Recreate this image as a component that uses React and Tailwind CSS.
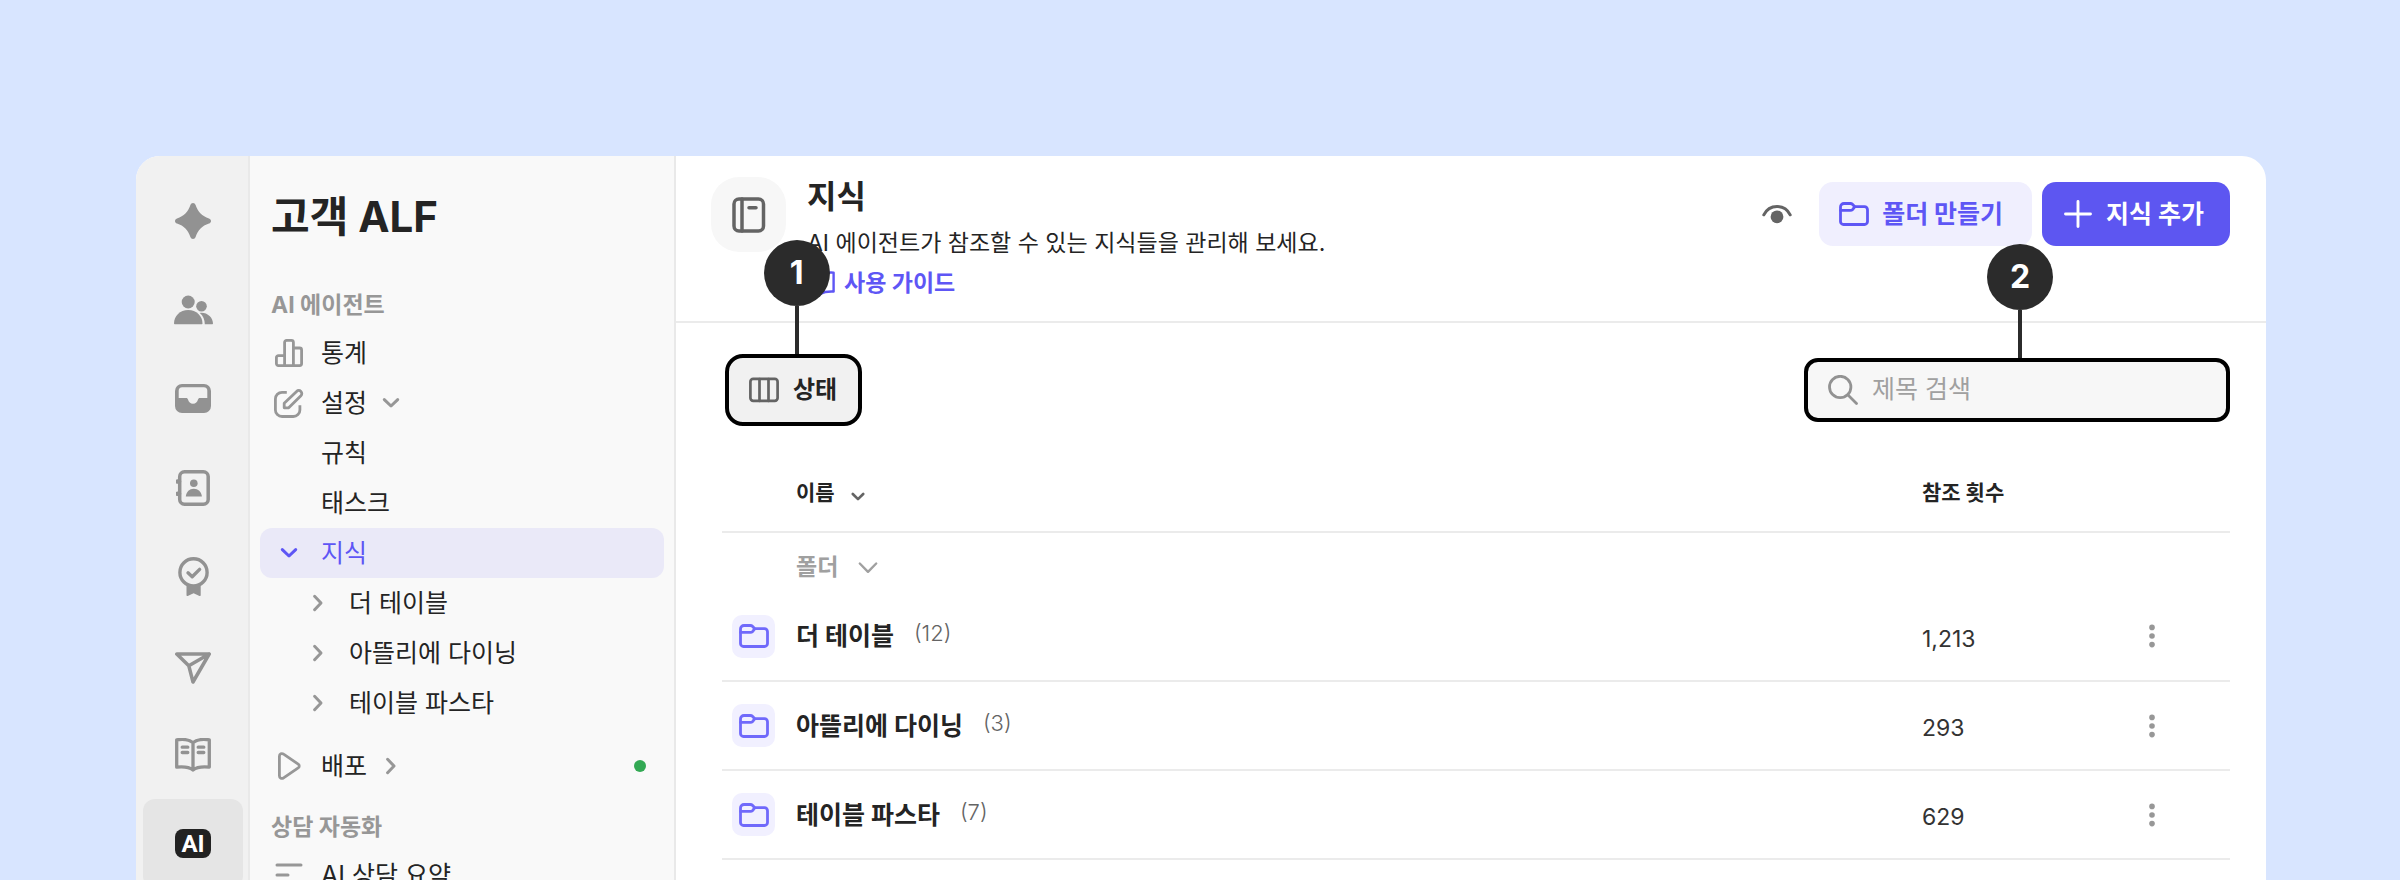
import { useState } from "react"

const folders = [
    { name: "더 테이블", count: 12, refs: "1,213" },
    { name: "아뜰리에 다이닝", count: 3, refs: "293" },
    { name: "테이블 파스타", count: 7, refs: "629" },
]

function Svg({ w, h, children, className = "" }) {
    return (
        <svg
            width={w}
            height={h}
            viewBox={`0 0 ${w} ${h}`}
            fill="none"
            stroke="currentColor"
            strokeLinecap="round"
            strokeLinejoin="round"
            aria-hidden="true"
            className={`shrink-0 ${className}`}
        >
            {children}
        </svg>
    )
}

function SparkleIcon() {
    return (
        <Svg w={36} h={36}>
            <path
                fill="currentColor"
                stroke="none"
                d="M18 0c1.300 0 2.100.8 2.600 2C23 9 27 13 34 15.400c1.200.5 2 1.300 2 2.600s-.8 2.100-2 2.600C27 23 23 27 20.600 34c-.5 1.200-1.300 2-2.600 2s-2.100-.8-2.600-2C13 27 9 23 2 20.600.8 20.100 0 19.300 0 18s.8-2.100 2-2.600C9 13 13 9 15.400 2c.5-1.200 1.300-2 2.600-2z"
            />
        </Svg>
    )
}

function UsersIcon() {
    return (
        <Svg w={39} h={30}>
            <g fill="currentColor" stroke="none">
                <circle cx="14.200" cy="7" r="6.500" />
                <circle cx="27.500" cy="11.300" r="5.300" />
                <path d="M0 28.500C0 21 6 15 14.200 15s14.300 6 14.300 13.500c0 .4-.3.700-.700.700H.7c-.4 0-.7-.3-.7-.7z" />
                <path d="M25.800 17.900C33 17 39 22.300 39 28.600c0 .4-.3.600-.6.600h-7.600c0-4.600-1.600-8.600-5-11.300z" />
            </g>
        </Svg>
    )
}

function InboxIcon() {
    return (
        <Svg w={36} h={29}>
            <path
                fill="currentColor"
                stroke="none"
                fillRule="evenodd"
                d="M7 0h22a7 7 0 0 1 7 7v15a7 7 0 0 1-7 7H7a7 7 0 0 1-7-7V7a7 7 0 0 1 7-7zM7.200 3.200A3.500 3.500 0 0 0 3.700 6.700V14h7.500c1 0 1.500.6 1.800 1.600.7 2.600 2.300 4.200 5 4.200s4.300-1.600 5-4.200c.3-1 .8-1.600 1.800-1.600h7.500V6.700a3.500 3.500 0 0 0-3.500-3.500z"
            />
        </Svg>
    )
}

function ContactIcon() {
    return (
        <Svg w={34} h={36}>
            <rect x="3.700" y="1.800" width="28.500" height="32.400" rx="4.800" strokeWidth="3.500" />
            <path d="M1.600 11.500h1.500M1.600 23.800h1.500" strokeWidth="4.400" />
            <circle cx="17.800" cy="13.200" r="3.800" fill="currentColor" stroke="none" />
            <path d="M9.800 26.500c.6-4.800 3.600-7.800 8-7.800s7.500 3 8.100 7.800z" fill="currentColor" stroke="none" />
        </Svg>
    )
}

function BadgeIcon() {
    return (
        <Svg w={31} h={39}>
            <circle cx="15.500" cy="15.400" r="13.600" strokeWidth="3.400" />
            <path d="M10 15.800l4.200 4L21.600 12.400" strokeWidth="3.400" />
            <path d="M8.500 27c4.500 1.700 9.500 1.700 14.200 0v11.200c0 .7-.6 1-1.200.7l-5.900-2.700-5.900 2.700c-.6.300-1.200 0-1.200-.7z" fill="currentColor" stroke="none" />
        </Svg>
    )
}

function SendIcon() {
    return (
        <Svg w={36} h={36}>
            <path d="M1.800 6h32.400L18 34 13.800 17.800zM13.800 17.800L34.200 6" strokeWidth="3.500" />
        </Svg>
    )
}

function BookOpenIcon() {
    return (
        <Svg w={36} h={34}>
            <path d="M18 4.800C14.500 1.500 8 1 1.700 1.800v27.400c6-.6 12-.6 16.300 2.800 4.300-3.400 10.300-3.400 16.300-2.800V1.800C28 1 21.500 1.500 18 4.800zM18 4.800V32" strokeWidth="3.300" />
            <path d="M7.200 9.200h5.600M7.200 14.500h5.600M23.200 9.200h5.600M23.200 14.500h5.600" strokeWidth="3.300" />
        </Svg>
    )
}

function GuideIcon() {
    return (
        <Svg w={28} h={24}>
            <path d="M14 4C11 1.800 6 1.300 1.400 1.600v19C6 20.400 10.500 20.500 14 22.800c3.500-2.300 8-2.400 12.600-2.200v-19C22 1.300 17 1.800 14 4zM14 4v18.500" strokeWidth="2.400" />
        </Svg>
    )
}

function AiIcon() {
    return (
        <span className="flex h-[29px] w-9 items-center justify-center rounded-lg bg-[#222] font-['Roboto',sans-serif] text-2xl leading-7 font-bold text-white">
            AI
        </span>
    )
}

function ChartIcon() {
    return (
        <Svg w={28} h={28}>
            <path d="M9.600 26.600H3.400a2 2 0 0 1-2-2v-6a2 2 0 0 1 2-2h6.200M9.600 26.600V3.400a2 2 0 0 1 2-2h4.800a2 2 0 0 1 2 2v23.200zM18.400 9h6.200a2 2 0 0 1 2 2v13.600a2 2 0 0 1-2 2h-6.200" strokeWidth="2.800" />
        </Svg>
    )
}

function EditIcon() {
    return (
        <Svg w={30} h={29}>
            <path d="M12.800 3.300H8A6.600 6.600 0 0 0 1.400 9.900v11A6.600 6.600 0 0 0 8 27.500h11.300a6.600 6.600 0 0 0 6.600-6.600V16.200" strokeWidth="2.800" strokeLinecap="butt" />
            <path d="M10.200 18.800v-4.500L22.600 2.400a2.950 2.950 0 0 1 4.300 4.300L14.700 18.800z" strokeWidth="2.800" />
        </Svg>
    )
}

function PlayIcon() {
    return (
        <Svg w={28} h={28}>
            <path d="M4.400 4.300v19.400c0 2.400 2.300 3.500 4.200 2.100l14.600-9.900c1.400-1 1.400-2.800 0-3.800L8.600 2.200C6.700.8 4.400 1.900 4.400 4.300z" strokeWidth="2.800" />
        </Svg>
    )
}

function LinesIcon() {
    return (
        <Svg w={28} h={28}>
            <path d="M2 4h24M2 14h11M2 24h24" strokeWidth="3" />
        </Svg>
    )
}

function FolderIcon() {
    return (
        <Svg w={30} h={24}>
            <path d="M1.500 5a3.500 3.500 0 0 1 3.500-3.500h6.300c1 0 1.700.3 2.400 1l2 2.200h9.800a3 3 0 0 1 3 3v11.800a3 3 0 0 1-3 3h-21a3 3 0 0 1-3-3z" strokeWidth="2.800" />
            <path d="M1.600 8.400h9.700c1 0 1.700-.3 2.400-1l2-2.600" strokeWidth="2.800" />
        </Svg>
    )
}

function NotebookIcon() {
    return (
        <Svg w={34} h={36}>
            <rect x="2" y="2" width="29.500" height="32" rx="5" strokeWidth="3.500" />
            <path d="M10 2v32" strokeWidth="3.500" />
            <path d="M17 10.800h7" strokeWidth="3.500" />
        </Svg>
    )
}

function ColumnsIcon() {
    return (
        <Svg w={30} h={26}>
            <rect x="1.400" y="1.900" width="27.200" height="22" rx="2.800" strokeWidth="2.700" />
            <path d="M10.500 2v22M19.500 2v22" strokeWidth="2.700" />
        </Svg>
    )
}

function EyeIcon() {
    return (
        <Svg w={30} h={20}>
            <path d="M1.800 10.800C4.500 5.300 9.300 2.400 15 2.400s10.500 2.900 13.200 8.400" strokeWidth="3" />
            <circle cx="15" cy="12.800" r="6.400" fill="currentColor" stroke="none" />
        </Svg>
    )
}

function SearchIcon() {
    return (
        <Svg w={30} h={30}>
            <circle cx="12.200" cy="12" r="10.700" strokeWidth="2.800" />
            <path d="M20 20l8.500 8.500" strokeWidth="2.800" />
        </Svg>
    )
}

function PlusIcon() {
    return (
        <Svg w={28} h={28}>
            <path d="M14 1.500v25M1.500 14h25" strokeWidth="2.900" />
        </Svg>
    )
}

function KebabIcon() {
    return (
        <Svg w={6} h={24}>
            <g fill="currentColor" stroke="none">
                <circle cx="3" cy="3.400" r="2.800" />
                <circle cx="3" cy="12" r="2.800" />
                <circle cx="3" cy="20.600" r="2.800" />
            </g>
        </Svg>
    )
}

function ChevronDown() {
    return (
        <Svg w={18} h={12}>
            <path d="M2.300 2.600L9 9l6.700-6.400" strokeWidth="3" />
        </Svg>
    )
}

function ChevronRight() {
    return (
        <Svg w={12} h={18}>
            <path d="M2.600 2.300L9 9l-6.400 6.700" strokeWidth="3" />
        </Svg>
    )
}

const railItems = [
    { label: "홈", Icon: SparkleIcon },
    { label: "팀", Icon: UsersIcon },
    { label: "받은 편지함", Icon: InboxIcon },
    { label: "연락처", Icon: ContactIcon },
    { label: "배지", Icon: BadgeIcon },
    { label: "보내기", Icon: SendIcon },
    { label: "도움말", Icon: BookOpenIcon },
    { label: "ALF", Icon: AiIcon, active: true },
]

function Rail() {
    return (
        <nav aria-label="메뉴" className="flex w-[114px] shrink-0 flex-col border-r-2 border-[#e9e9e9] bg-[#f1f1f1] pt-5 pr-[5px] pl-[7px]">
            {railItems.map(({ label, Icon, active }) => (
                <button
                    key={label}
                    type="button"
                    aria-label={label}
                    className={`flex h-[89px] shrink-0 items-center justify-center rounded-xl text-[#929292] ${active ? "bg-[#e5e5e5]" : ""}`}
                >
                    <Icon />
                </button>
            ))}
        </nav>
    )
}

function SideItem({ icon, label, sub, active, trailing, children }) {
    return (
        <button
            type="button"
            className={`flex h-[50px] w-full shrink-0 items-center rounded-xl pr-[18px] text-left ${sub ? "pl-11" : "pl-[14px]"} ${active ? "bg-[#eae9f8] text-[#5e56f5]" : "text-[#242424]"}`}
        >
            <span className={`flex shrink-0 items-center justify-center ${sub ? "w-7" : "w-[30px]"} ${active ? "" : "text-[#979797]"}`}>{icon}</span>
            <span className="ml-[17px]">{label}</span>
            {trailing && <span className="ml-[15px] flex w-[18px] justify-center text-[#979797]">{trailing}</span>}
            {children}
        </button>
    )
}

function Sidebar() {
    return (
        <aside className="flex w-[426px] shrink-0 flex-col border-r-2 border-[#e9e9e9] bg-[#f9f9f9] px-[10px] text-[25px] leading-9">
            <h1 className="mt-[33px] pl-[11px] text-[42px] leading-[56px] font-bold text-[#242424]">고객 ALF</h1>
            <h2 className="mt-[42px] mb-[5px] pl-[11px] text-[23px] leading-9 font-bold text-[#979797]">AI 에이전트</h2>
            <SideItem icon={<ChartIcon />} label="통계" />
            <SideItem icon={<EditIcon />} label="설정" trailing={<ChevronDown />} />
            <SideItem label="규칙" />
            <SideItem label="태스크" />
            <SideItem icon={<ChevronDown />} label="지식" active />
            {folders.map((f) => (
                <SideItem key={f.name} sub icon={<ChevronRight />} label={f.name} />
            ))}
            <div className="mt-[13px]">
                <SideItem icon={<PlayIcon />} label="배포" trailing={<ChevronRight />}>
                    <span className="ml-auto h-3 w-3 rounded-full bg-[#33a954]" />
                </SideItem>
            </div>
            <h2 className="mt-[18px] mb-[5px] pl-[11px] text-[23px] leading-9 font-bold text-[#979797]">상담 자동화</h2>
            <SideItem icon={<LinesIcon />} label="AI 상담 요약" />
        </aside>
    )
}

// numbered marker standing above the control it belongs to
function Callout({ number }) {
    return (
        <div className="absolute bottom-full left-1/2 ml-[3px] flex -translate-x-1/2 flex-col items-center">
            <span className="flex h-[66px] w-[66px] items-center justify-center rounded-full bg-[#2b2b2b] text-[32px] leading-none font-bold text-white">
                {number}
            </span>
            <span className="h-12 w-1 bg-[#2b2b2b]" />
        </div>
    )
}

function Header() {
    return (
        <header className="flex h-[167px] items-start border-b-2 border-[#ebebeb] pr-9 pl-[35px]">
            <div className="mt-[21px] flex h-[75px] w-[75px] shrink-0 items-center justify-center rounded-[28px] bg-[#f7f7f7] text-[#646464]">
                <NotebookIcon />
            </div>
            <div className="mt-[18px] ml-[21px] flex flex-col items-start">
                <h2 className="text-[32px] leading-[46px] font-bold text-[#242424]">지식</h2>
                <p className="mt-[3px] text-[23px] leading-10 text-[#242424]">AI 에이전트가 참조할 수 있는 지식들을 관리해 보세요.</p>
                <a href="#guide" className="flex items-center gap-[9px] text-[23px] leading-10 font-bold text-[#5e56f5]">
                    <GuideIcon />
                    사용 가이드
                </a>
            </div>
            <div className="mt-[26px] ml-auto flex items-center text-[25px] leading-9 font-bold">
                <button type="button" aria-label="미리보기" className="mr-[27px] text-[#646464]">
                    <EyeIcon />
                </button>
                <button type="button" className="mr-[10px] flex h-16 items-center gap-[13px] rounded-[14px] bg-[#f0effe] pr-[29px] pl-5 text-[#5e56f5]">
                    <FolderIcon />
                    폴더 만들기
                </button>
                <button type="button" className="flex h-16 items-center gap-[14px] rounded-[14px] bg-[#5d56f1] pr-[26px] pl-[22px] text-white">
                    <PlusIcon />
                    지식 추가
                </button>
            </div>
        </header>
    )
}

function App() {
    const [query, setQuery] = useState("")

    return (
        <div className="flex h-screen overflow-hidden bg-[#d8e5ff] pt-[156px] pr-[134px] pl-[136px] font-['Inter','Noto_Sans_CJK_KR',sans-serif]">
            <div className="flex min-w-0 flex-1 overflow-hidden rounded-t-3xl bg-white">
                <Rail />
                <Sidebar />
                <main className="min-w-0 flex-1">
                    <Header />
                    <div className="mt-[31px] flex items-center justify-between pr-9 pl-[49px]">
                        <div className="relative">
                            <button type="button" className="flex h-[72px] items-center gap-[14px] rounded-[18px] border-4 border-black bg-[#f1f1f1] pr-[21px] pl-5 text-2xl font-bold text-[#242424]">
                                <span className="text-[#646464]"><ColumnsIcon /></span>
                                상태
                            </button>
                            <Callout number={1} />
                        </div>
                        <div className="relative">
                            <label className="flex h-16 w-[426px] items-center gap-[14px] rounded-[14px] border-4 border-black bg-[#f7f7f7] px-5 text-[#929292]">
                                <SearchIcon />
                                <input
                                    type="text"
                                    aria-label="제목 검색"
                                    placeholder="제목 검색"
                                    value={query}
                                    onChange={(e) => setQuery(e.target.value)}
                                    className="min-w-0 flex-1 bg-transparent text-[25px] text-[#242424] outline-none placeholder:text-[#a0a0a0]"
                                />
                            </label>
                            <Callout number={2} />
                        </div>
                    </div>
                    <div className="mt-7 pr-9 pl-[46px]">
                        <table className="w-full table-fixed border-collapse text-left text-[#242424]">
                            <colgroup>
                                <col className="w-[74px]" />
                                <col />
                                <col className="w-[152px]" />
                                <col className="w-[156px]" />
                            </colgroup>
                            <thead>
                                <tr className="h-[78px] border-b-2 border-[#ebebeb] text-[21px] font-bold">
                                    <td />
                                    <th scope="col">
                                        <button type="button" className="flex items-center gap-4">
                                            이름
                                            <Svg w={14} h={10} className="mt-2 text-[#646464]">
                                                <path d="M1.800 2L7 7.200 12.200 2" strokeWidth="2.600" />
                                            </Svg>
                                        </button>
                                    </th>
                                    <th scope="col">참조 횟수</th>
                                    <td />
                                </tr>
                            </thead>
                            <tbody>
                                <tr className="h-[60px] text-[#a0a0a0]">
                                    <td />
                                    <td colSpan={3} className="pt-[10px] text-[23px] font-bold">
                                        <button type="button" className="flex items-center gap-5">
                                            폴더
                                            <Svg w={20} h={14}>
                                                <path d="M1.800 2.500L10 10.800l8.200-8.300" strokeWidth="2.400" />
                                            </Svg>
                                        </button>
                                    </td>
                                </tr>
                                {folders.map((f) => (
                                    <tr key={f.name} className="h-[89px] border-b-2 border-[#ebebeb]">
                                        <td className="pl-[10px]">
                                            <span className="flex h-[43px] w-[43px] items-center justify-center rounded-[10px] bg-[#f1f0ff] text-[#7069fb]">
                                                <FolderIcon />
                                            </span>
                                        </td>
                                        <td>
                                            <div className="flex items-center">
                                                <span className="text-[25px] leading-9 font-bold">{f.name}</span>
                                                <span className="ml-5 pb-[6px] text-[22px] leading-[30px] font-light text-[#646464]">({f.count})</span>
                                            </div>
                                        </td>
                                        <td className="pt-[6px] text-[23px] text-[#333]">{f.refs}</td>
                                        <td>
                                            <button type="button" aria-label={`${f.name} 더보기`} className="mx-auto flex w-6 justify-center text-[#979797]">
                                                <KebabIcon />
                                            </button>
                                        </td>
                                    </tr>
                                ))}
                            </tbody>
                        </table>
                    </div>
                </main>
            </div>
        </div>
    )
}

export default App
